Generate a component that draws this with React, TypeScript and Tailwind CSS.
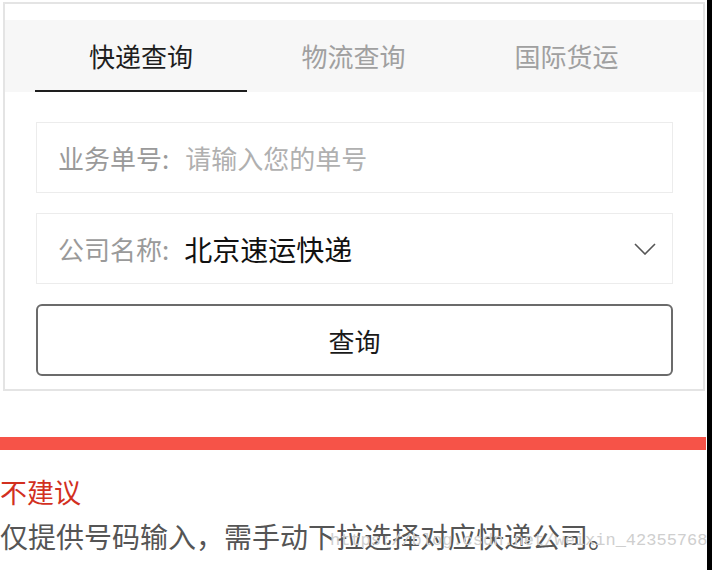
import React from "react";

const font = { fontFamily: '"Noto Sans CJK SC", "Noto Sans", sans-serif' };

export default function App() {
  return (
    <div className="flex h-[570px] w-[712px] overflow-hidden bg-white" style={font}>
      <div className="relative w-[707px]">
        {/* card */}
        <div className="ml-[3px] mt-[2px] w-[702px] border-2 border-[#e4e4e4] bg-white pb-[13px] pt-[16px]">
          <div className="h-[72px] bg-[#f7f7f7] pl-[30px]">
            <div className="flex h-full w-[638px]">
              <div className="flex h-full w-[212px] flex-col">
                <div className="flex flex-1 items-center justify-center text-[26px] text-[#1e1e1e]">快递查询</div>
                <div className="h-[2px] bg-[#1e1e1e]" />
              </div>
              <div className="flex h-full w-[213px] items-center justify-center pb-[2px] text-[26px] text-[#a0a0a0]">物流查询</div>
              <div className="flex h-full w-[213px] items-center justify-center pb-[2px] text-[26px] text-[#a0a0a0]">国际货运</div>
            </div>
          </div>
          <div className="ml-[31px] mt-[30px] flex w-[637px] flex-col gap-[20px]">
            <div className="flex h-[71px] items-center border border-[#ececec] pl-[21px] text-[26px]">
              <span className="text-[#9a9a9a]">业务单号:</span>
              <span className="ml-[16px] text-[#b0b0b0]">请输入您的单号</span>
            </div>
            <div className="flex h-[71px] items-center border border-[#ececec] pl-[21px] pr-[16px] text-[26px]">
              <span className="text-[#9a9a9a]">公司名称:</span>
              <span className="ml-[15px] text-[28px] text-[#111]">北京速运快递</span>
              <svg className="ml-auto" width="22" height="12" viewBox="0 0 22 12" fill="none">
                <path d="M1 1 L11 11 L21 1" stroke="#555" strokeWidth="1.6" />
              </svg>
            </div>
            <div className="flex h-[72px] items-center justify-center rounded-[6px] border-2 border-[#6b6b6b] text-[26px] text-[#1a1a1a]">
              查询
            </div>
          </div>
        </div>
        {/* red bar */}
        <div className="mt-[46px] h-[13px] w-[706px] bg-[#f65348]" />
        <div className="mt-[27px] text-[27px] leading-[30px] text-[#d2301f]">不建议</div>
        <div className="mt-[12px] text-[28px] leading-[34px] text-[#555]">仅提供号码输入，需手动下拉选择对应快递公司。</div>
        <div
          className="absolute left-[330px] top-[530px] text-[17px] leading-[22px] text-[#cfcfcf]"
          style={{ fontFamily: '"Liberation Mono", monospace' }}
        >
          https://blog.csdn.net/weixin_42355768
        </div>
      </div>
      <div className="w-[5px] bg-black" />
    </div>
  );
}
